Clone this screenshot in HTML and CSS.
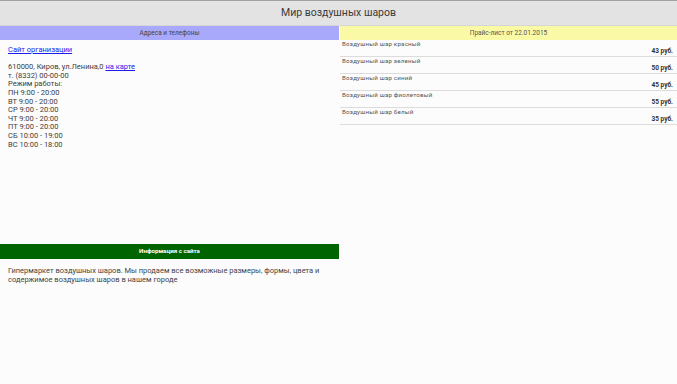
FILE: index.html
```html
<!DOCTYPE html>
<html lang="ru">
<head>
    <meta charset="UTF-8">
    <meta name="viewport" content="width=device-width, initial-scale=1.0">
    <title>Мир воздушных шаров</title>
    <link rel="stylesheet" href="styles.css">
</head>
<body>
    <header class="top-bar">Мир воздушных шаров</header>
    <div class="columns">
        <div class="left-col">
            <div class="section-title title-contacts">Адреса и телефоны</div>
            <div class="contacts">
                <a href="#" class="link">Сайт организации</a>
                <div class="address">
                    <div>610000, Киров, ул.Ленина,0 <a href="#" class="link">на карте</a></div>
                    <div>т. (8332) 00-00-00</div>
                    <div>Режим работы:</div>
                    <div>ПН 9:00 - 20:00</div>
                    <div>ВТ 9:00 - 20:00</div>
                    <div>СР 9:00 - 20:00</div>
                    <div>ЧТ 9:00 - 20:00</div>
                    <div>ПТ 9:00 - 20:00</div>
                    <div>СБ 10:00 - 19:00</div>
                    <div>ВС 10:00 - 18:00</div>
                </div>
            </div>
            <div class="section-title title-info">Информация с сайта</div>
            <p class="info">Гипермаркет воздушных шаров. Мы продаем все возможные размеры, формы, цвета и содержимое воздушных шаров в нашем городе</p>
        </div>
        <div class="right-col">
            <div class="section-title title-price">Прайс-лист от 22.01.2015</div>
            <ul class="price-list">
                <li class="price-row"><span class="item-name">Воздушный шар красный</span><span class="item-price">43 руб.</span></li>
                <li class="price-row"><span class="item-name">Воздушный шар зеленый</span><span class="item-price">50 руб.</span></li>
                <li class="price-row"><span class="item-name">Воздушный шар синий</span><span class="item-price">45 руб.</span></li>
                <li class="price-row"><span class="item-name">Воздушный шар фиолетовый</span><span class="item-price">55 руб.</span></li>
                <li class="price-row"><span class="item-name">Воздушный шар белый</span><span class="item-price">35 руб.</span></li>
            </ul>
        </div>
    </div>
</body>
</html>
```

FILE: styles.css
```css
* {
    margin: 0;
    padding: 0;
    box-sizing: border-box;
    font-family: Roboto, "Liberation Sans", sans-serif;
}

body {
    background: #fcfcfc;
    color: #333;
    height: 384px;
    overflow: hidden;
}

.top-bar {
    height: 26px;
    border-top: 1px solid #a0a0a0;
    border-bottom: 1px solid #d6d6d6;
    background: #e3e3e3;
    color: #3a3a3a;
    font-size: 10.5px;
    line-height: 24px;
    text-align: center;
}

.columns {
    display: grid;
    grid-template-columns: 339px 1fr;
    gap: 1px;
}

.section-title {
    height: 14px;
    font-size: 6.5px;
    line-height: 14px;
    text-align: center;
}

.title-contacts {
    background: #a9a9fb;
    color: #444;
}

.title-price {
    background: #fafaa6;
    color: #555;
}

.title-info {
    height: 15px;
    line-height: 15px;
    background: #006400;
    color: #fff;
    font-size: 6.2px;
    font-weight: bold;
}

.contacts {
    height: 204px;
    padding: 6px 8px;
    font-size: 7.5px;
    line-height: 8.6px;
    color: #3c3c3c;
}

.link {
    color: #1c1cf0;
    text-decoration: underline;
}

.address {
    margin-top: 8.6px;
}

.info {
    padding: 7px 8px;
    font-size: 7.5px;
    line-height: 9px;
    color: #444;
}

.price-list {
    list-style: none;
}

.price-row {
    height: 17px;
    padding: 1px 4px 0 2px;
    border-bottom: 1px solid #dcdcdc;
    display: flex;
    flex-direction: column;
}

.item-name {
    font-size: 6.2px;
    line-height: 6px;
    letter-spacing: 0.2px;
    color: #555;
}

.item-price {
    align-self: flex-end;
    font-size: 6.5px;
    line-height: 9px;
    font-weight: bold;
    color: #333;
}
```
